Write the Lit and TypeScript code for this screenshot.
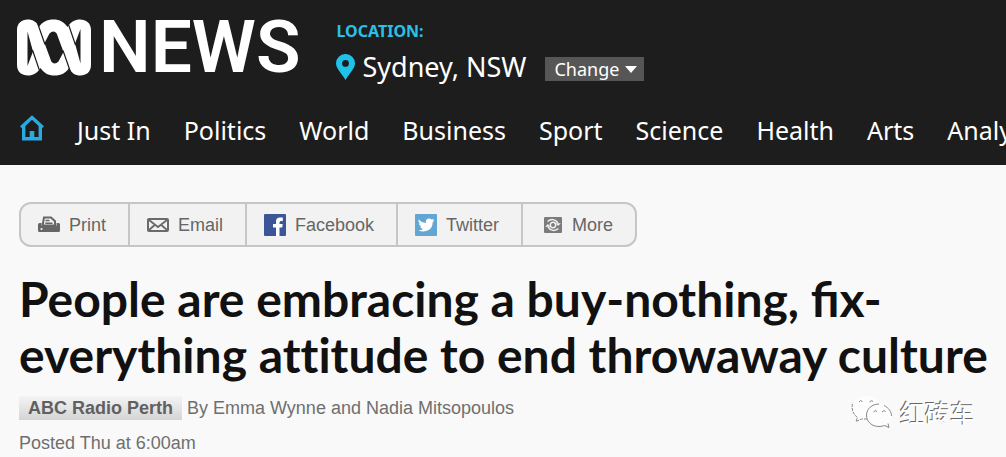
import { LitElement, html, css, svg } from "lit";
import { customElement } from "lit/decorators.js";

const SECTIONS = [
  "Just In", "Politics", "World", "Business", "Sport",
  "Science", "Health", "Arts", "Analysis",
];

const glyphs = {
  print: svg`<svg width="22" height="18" viewBox="0 0 22 18" aria-hidden="true">
    <path fill="#666" d="M0 8.500Q0 7 1.500 7H3.500V10H18.500V7H20.500Q22 7 22 8.500V14.500Q22 16 20.500 16H1.500Q0 16 0 14.500Z"/>
    <path fill="#f2f2f2" stroke="#666" stroke-width="2" d="M6 1.500H13L17 5.200V9.500H4.600Z"/>
    <path fill="none" stroke="#666" stroke-width="1.400" d="M7.500 4.500H11.500M7.200 7.300H14.500"/>
    <path fill="#666" d="M3.500 9.500H18.500V13H3.500Z"/>
    <circle cx="3.500" cy="13" r="1.100" fill="#f2f2f2"/></svg>`,
  email: svg`<svg width="22" height="14" viewBox="0 0 22 14" aria-hidden="true">
    <rect x="1" y="1" width="20" height="12" rx="1" fill="#f2f2f2" stroke="#6a6a6a" stroke-width="2"/>
    <path fill="none" stroke="#6a6a6a" stroke-width="1.800" d="M2 2L11 9L20 2M2 12L8 6.800M20 12L14 6.800"/></svg>`,
  facebook: svg`<svg width="22" height="22" viewBox="0 0 22 22" aria-hidden="true">
    <rect width="22" height="22" rx="1" fill="#3c5596"/>
    <path fill="#fff" d="M12 22V13.500H9V10H12V7.500Q12 3.500 16 3.500H18.800V7H17Q15.500 7 15.500 8.500V10H18.700L18.200 13.500H15.500V22Z"/></svg>`,
  twitter: svg`<svg width="22" height="22" viewBox="0 0 22 22" aria-hidden="true">
    <rect width="22" height="22" rx="1" fill="#63a6d3"/>
    <path fill="#fff" d="M3.500 5.300Q6.500 8.700 10.900 9Q10.300 5.200 13.700 4.600Q15.300 4.400 16.500 5.600L18.800 4.800Q18.500 5.900 17.400 6.700L19.500 6.200Q18.900 7.300 17.700 8.200Q17.600 13.500 13.700 16Q8.600 18.800 3.300 16.200Q6.200 16.300 8 14.900Q5.700 14.600 5 12.600H6.500Q4 11.700 3.800 9.200L5.200 9.600Q2.900 7.700 3.500 5.300Z"/></svg>`,
  more: svg`<svg width="18" height="16" viewBox="0 0 18 16" aria-hidden="true">
    <rect width="18" height="16" rx="1" fill="#7b7b7b"/>
    <circle cx="9" cy="8" r="2.700" fill="none" stroke="#f2f2f2" stroke-width="1.500"/>
    <path fill="none" stroke="#f2f2f2" stroke-width="1.400" d="M3.500 4.500Q6 2.300 9 2.600T14 6M14.500 11.500Q12 13.700 9 13.400T4 10"/>
    <path fill="#f2f2f2" d="M11.500 6.200H16.800L14.200 9ZM6.500 9.800H1.200L3.800 7Z"/></svg>`,
};

const SHARES: [keyof typeof glyphs, string][] = [
  ["print", "Print"], ["email", "Email"], ["facebook", "Facebook"],
  ["twitter", "Twitter"], ["more", "More"],
];

@customElement("site-header")
class SiteHeader extends LitElement {
  static styles = css`
    :host { display: block; background: #1d1d1d; color: #fff; font-family: "Noto Sans", sans-serif; overflow: hidden; }
    a { color: inherit; text-decoration: none; }
    .top { display: flex; align-items: flex-start; gap: 36px; padding: 17px 17px 0; }
    .brand { display: flex; align-items: center; gap: 8px; font: 600 73px/60px Roboto, sans-serif; }
    .brand svg { flex: none; }
    .label { margin: 0; color: #2bc0e6; font-size: 16px; font-weight: 700; line-height: 28px; }
    .place { display: flex; align-items: center; gap: 7px; font-size: 27px; line-height: 44px; white-space: nowrap; }
    .change {
      display: flex; align-items: center; gap: 6px; margin: 4px 0 0 12px; padding: 0 7px 0 9px; height: 24px;
      border: 0; background: #565656; color: #fff; font: 18px/24px "Noto Sans", sans-serif;
    }
    nav { display: flex; align-items: center; gap: 33px; padding: 6px 20px 0; white-space: nowrap; font-size: 25px; line-height: 70px; }
    nav a { flex: none; }
    .home { display: flex; }
    .home svg { margin-top: -4px; }
  `;
  render() {
    return html`
      <div class="top">
        <a class="brand" href="#" aria-label="ABC News">
          <svg width="74" height="57" viewBox="0 0 74 57" aria-hidden="true">
            <path fill="#fff" d="M0 11C0 4 5 .5 10.500 .5C16 .5 20 3 22 8C25 3 30 .5 36.500 .5C43 .5 47 3 50.500 8C54 2.500 58 .5 63 .5C69 .5 74 4 74 11V46C74 53 69 56.500 63.500 56.500C58 56.500 54.500 54 52 49C49 54 44 56.500 37.500 56.500C31 56.500 27 54 23.500 49C20 54.500 16 56.500 11 56.500C5 56.500 0 53 0 46Z" />
            <path fill="#1d1d1d" d="M10.500 12.500L16 32.500L10.500 47ZM63.500 44.500L58 24.500L63.500 10ZM27.500 24L32.500 14.500Q36.500 10.500 39.700 14.500L46.500 33L41.500 42.500Q37.500 46.500 34.300 42.500Z" />
            <path fill="none" stroke="#1d1d1d" stroke-width="1.200" d="M15.500 31L23 53M20.500 4L28 25.500M58.500 26L51 4M53.500 53L46 31.500" />
          </svg>
          <span>NEWS</span>
        </a>
        <div>
          <p class="label">LOCATION:</p>
          <div class="place">
            <svg width="19" height="26" viewBox="0 0 19 26" aria-hidden="true">
              <path fill="#1fc3ea" fill-rule="evenodd" d="M9.500 0A9.300 9.300 0 0 0 0 9.300C0 14.500 5 18.500 9.500 26C14 18.500 19 14.500 19 9.300A9.300 9.300 0 0 0 9.500 0ZM9.500 6A3.400 3.400 0 1 1 9.500 12.800A3.400 3.400 0 1 1 9.500 6Z" />
            </svg>
            <span>Sydney, NSW</span>
            <button class="change" type="button">Change
              <svg width="12" height="7" viewBox="0 0 12 7" aria-hidden="true"><path fill="#fff" d="M0 0H12L6 7Z" /></svg>
            </button>
          </div>
        </div>
      </div>
      <nav aria-label="Sections">
        <a class="home" href="#" aria-label="Home">
          <svg width="24" height="26" viewBox="0 0 24 26" fill="none" stroke="#29abe2" stroke-width="3.4" aria-hidden="true">
            <path d="M1.200 12.500L12 2.500L22.800 12.500" /><path d="M3.700 10V23.800H20.300V10" /><path fill="#29abe2" stroke="none" d="M9.700 16H14.300V24H9.700Z" />
          </svg>
        </a>
        ${SECTIONS.map((s) => html`<a href="#">${s}</a>`)}
      </nav>`;
  }
}

@customElement("share-bar")
class ShareBar extends LitElement {
  static styles = css`
    :host { display: flex; }
    .bar { display: flex; border: 2px solid #c6c6c6; border-radius: 12px; background: #f2f2f2; overflow: hidden; }
    a {
      display: flex; align-items: center; gap: 9px; padding: 1px 22px 0 17px;
      color: #666; font-size: 18px; line-height: 40px; text-decoration: none;
    }
    a + a { border-left: 2px solid #c6c6c6; }
    a:last-child { gap: 10px; padding-left: 21px; }
  `;
  render() {
    return html`<div class="bar">${SHARES.map(([icon, label]) => html`<a href="#">${glyphs[icon]}<span>${label}</span></a>`)}</div>`;
  }
}

@customElement("app-root")
class AppRoot extends LitElement {
  static styles = css`
    :host { display: block; position: relative; min-height: 100vh; background: #f9f9f9; font-family: "Liberation Sans", Arial, sans-serif; }
    main { padding: 37px 17px 0 19px; color: #6f6f6f; font-size: 18px; }
    h1 { margin: 24px 0 0; color: #111; font: 700 48px/56px Lato, sans-serif; }
    .plain { font-variant-ligatures: none; }
    .byline { display: flex; align-items: center; gap: 5px; margin: 13px 0 0; line-height: 24px; }
    .byline a { padding: 0 9px; background: linear-gradient(#f4f4f4, #d4d4d4); color: #606060; font-weight: 700; text-decoration: none; }
    .posted { margin: 11px 0 0; line-height: 24px; }
    .mark {
      position: absolute; right: 31px; bottom: 27px; display: flex; align-items: center; gap: 7px;
      color: #fff; font: 25px/36px "Noto Sans CJK SC", sans-serif; text-shadow: -1px -1px 0 #666;
    }
  `;
  render() {
    return html`
      <site-header></site-header>
      <main>
        <share-bar></share-bar>
        <h1>People are embracing a buy-nothing, fix-everything <span class="plain">attitude</span> to end throwaway culture</h1>
        <p class="byline"><a href="#">ABC Radio Perth</a><span>By Emma Wynne and Nadia Mitsopoulos</span></p>
        <p class="posted">Posted Thu at 6:00am</p>
      </main>
      <div class="mark">
        <svg width="42" height="34" viewBox="0 0 42 34" fill="#fdfdfd" aria-hidden="true">
          <path d="M15 1C7 1 1 6 1 13C1 17 3 20 6.500 22.500L5 27L10.500 24.500Q15 26 19 25L29 10C27 4 22 1 15 1Z" />
          <path fill="none" stroke="#888" stroke-dasharray="3 1" d="M1.500 9C0 15 3 20 6.500 22.500L5 26.500L10.500 24H16" />
          <path d="M28 9C21 9 15.500 14 15.500 20C15.500 27 21 31.500 28 31.500Q31 31.500 33.500 30.500L38 32.500L37 28.500Q40.500 25 40.500 20C40.500 14 35 9 28 9Z" />
          <path fill="none" stroke="#888" d="M28 9C21 9 15.500 14 15.500 20C15.500 27 21 31.500 28 31.500Q31 31.500 33.500 30.500L38 32.500L37 28.500M33 10.500C38 13 40.500 17 40.500 21" />
          <path fill="none" stroke="#888" d="M8 7Q9.500 4.500 11.500 6.500M18.500 7Q20.500 4.500 22 6.500M22.500 17Q24 14.500 26 16.500M31 17Q33 14.500 34.500 16.500" />
        </svg>
        <span>红砖车</span>
      </div>`;
  }
}
